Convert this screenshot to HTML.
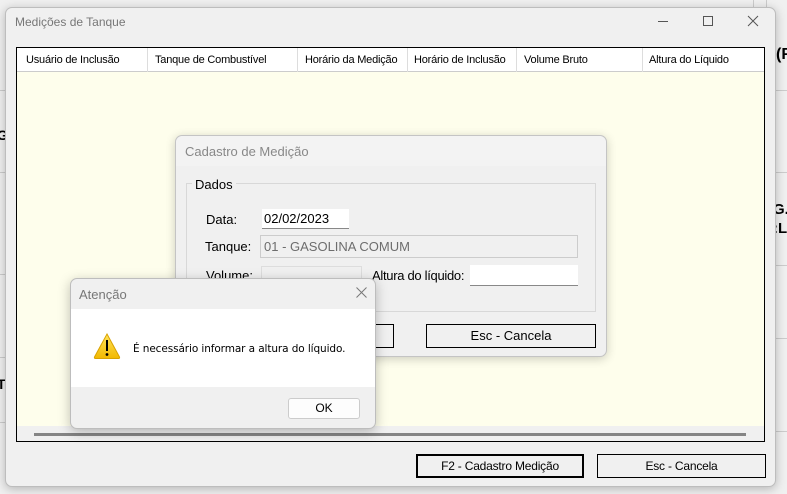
<!DOCTYPE html>
<html><head><meta charset="utf-8"><style>
*{box-sizing:border-box;margin:0;padding:0}
body{width:787px;height:494px;overflow:hidden;background:#f0f0f0;font-family:"Liberation Sans",sans-serif;font-size:12px;color:#000;position:relative}
.a{position:absolute}
.hl{position:absolute;height:1px;background:#d6d6d6}
.win{position:absolute;left:5px;top:7px;width:771px;height:480px;background:#f0f0f0;border:1px solid #bdbdbd;border-radius:7px;box-shadow:0 2px 10px rgba(0,0,0,.25)}
.btn{position:absolute;border:1px solid #000;background:#f0f0f0;text-align:center;font-size:12px}
</style></head><body>
<div class="a" style="left:753px;top:0;width:14px;height:8px;border-left:1px solid #ccc;border-right:1px solid #ccc"></div>
<div class="hl" style="left:0;top:90px;width:20px;background:#ccc"></div>
<div class="hl" style="left:0;top:172px;width:20px;background:#ccc"></div>
<div class="hl" style="left:0;top:274px;width:20px;background:#ccc"></div>
<div class="hl" style="left:0;top:357px;width:20px;background:#ccc"></div>
<div class="hl" style="left:0;top:422px;width:20px;background:#ccc"></div>
<div class="a" style="left:-3px;top:127px;font-weight:bold;font-size:14px">G</div>
<div class="a" style="left:-3px;top:376px;font-weight:bold;font-size:14px">T</div>
<div class="hl" style="left:776px;top:90px;width:11px;background:#ccc"></div>
<div class="hl" style="left:776px;top:172px;width:11px;background:#ccc"></div>
<div class="hl" style="left:776px;top:265px;width:11px;background:#ccc"></div>
<div class="hl" style="left:776px;top:338px;width:11px;background:#ccc"></div>
<div class="hl" style="left:776px;top:431px;width:11px;background:#ccc"></div>
<div class="a" style="left:776px;top:46px;font-weight:bold;font-size:16px">(F</div>
<div class="a" style="left:773px;top:201px;font-weight:bold;font-size:15px">G.</div>
<div class="a" style="left:773px;top:220px;font-weight:bold;font-size:15px">:L</div>

<div class="win">
 <div class="a" style="left:9px;top:7px;color:#777;font-size:12px">Medições de Tanque</div>
 <div class="a" style="left:652px;top:13px;width:10px;height:1px;background:#555"></div>
 <div class="a" style="left:697px;top:8px;width:10px;height:10px;border:1px solid #555"></div>
 <svg class="a" style="left:741px;top:7px" width="12" height="12"><path d="M1 1L11 11M11 1L1 11" stroke="#555" stroke-width="1"/></svg>
 <div class="a" style="left:10px;top:39px;width:749px;height:395px;border:1px solid #000;background:#fefeec">
  <div class="a" style="left:0;top:0;width:747px;height:24px;background:#fff;border-bottom:1px solid #ccc;font-size:11px;letter-spacing:-0.2px">
   <div class="a" style="left:9px;top:6px">Usuário de Inclusão</div>
   <div class="a" style="left:130px;top:0;height:24px;border-left:1px solid #ddd"></div>
   <div class="a" style="left:138px;top:6px">Tanque de Combustível</div>
   <div class="a" style="left:280px;top:0;height:24px;border-left:1px solid #ddd"></div>
   <div class="a" style="left:288px;top:6px">Horário da Medição</div>
   <div class="a" style="left:390px;top:0;height:24px;border-left:1px solid #ddd"></div>
   <div class="a" style="left:397px;top:6px">Horário de Inclusão</div>
   <div class="a" style="left:499px;top:0;height:24px;border-left:1px solid #ddd"></div>
   <div class="a" style="left:507px;top:6px">Volume Bruto</div>
   <div class="a" style="left:625px;top:0;height:24px;border-left:1px solid #ddd"></div>
   <div class="a" style="left:632px;top:6px">Altura do Líquido</div>
  </div>
  <div class="a" style="left:0;top:378px;width:747px;height:15px;background:#f0f0f0"></div>
  <div class="a" style="left:17px;top:385px;width:712px;height:3px;background:#858585"></div>
 </div>
 <div class="btn" style="left:410px;top:446px;width:168px;height:24px;border-width:2px;line-height:20px;letter-spacing:-0.2px">F2 - Cadastro Medição</div>
 <div class="btn" style="left:591px;top:446px;width:169px;height:24px;line-height:22px;letter-spacing:-0.2px">Esc - Cancela</div>
</div>

<div class="a" style="left:175px;top:135px;width:432px;height:222px;background:#f0f0f0;border:1px solid #c4c4c4;border-radius:7px;box-shadow:0 2px 10px rgba(0,0,0,.2)">
 <div class="a" style="left:0;top:0;width:430px;height:30px;background:#f3f3f3;border-radius:7px 7px 0 0"></div>
 <div class="a" style="left:9px;top:8px;color:#888;font-size:13px">Cadastro de Medição</div>
 <div class="a" style="left:10px;top:47px;width:410px;height:129px;border:1px solid #d8d8d8"></div>
 <div class="a" style="left:16px;top:41px;background:#f0f0f0;padding:0 3px;font-size:13px">Dados</div>
 <div class="a" style="left:30px;top:76px;font-size:13px">Data:</div>
 <div class="a" style="left:86px;top:73px;width:87px;height:20px;background:#fff;border-bottom:1px solid #888;padding:2px 2px;font-size:13px">02/02/2023</div>
 <div class="a" style="left:29px;top:103px;font-size:13px">Tanque:</div>
 <div class="a" style="left:84px;top:99px;width:318px;height:23px;background:#f0f0f0;border:1px solid #ccc;padding:3px 3px;font-size:13px;color:#6d6d6d">01 - GASOLINA COMUM</div>
 <div class="a" style="left:30px;top:132px;font-size:13px">Volume:</div>
 <div class="a" style="left:85px;top:130px;width:101px;height:20px;background:#f0f0f0;border:1px solid #ddd"></div>
 <div class="a" style="left:196px;top:132px;font-size:13px;letter-spacing:-0.3px">Altura do líquido:</div>
 <div class="a" style="left:294px;top:129px;width:108px;height:21px;background:#fff;border-bottom:1px solid #888"></div>
 <div class="btn" style="left:110px;top:188px;width:108px;height:24px"></div>
 <div class="btn" style="left:250px;top:188px;width:170px;height:24px;line-height:22px;font-size:13px">Esc - Cancela</div>
</div>

<div class="a" style="left:70px;top:278px;width:306px;height:151px;background:#f0f0f0;border:1px solid #bdbdbd;border-radius:7px;box-shadow:0 3px 12px rgba(0,0,0,.25);overflow:hidden">
 <div class="a" style="left:8px;top:8px;color:#777;font-size:13px">Atenção</div>
 <svg class="a" style="left:285px;top:8px" width="11" height="11"><path d="M0.5 0.5L10.5 10.5M10.5 0.5L0.5 10.5" stroke="#777" stroke-width="1"/></svg>
 <div class="a" style="left:0;top:30px;width:306px;height:78px;background:#fff"></div>
 <svg class="a" style="left:22px;top:53px" width="28" height="28" viewBox="0 0 28 28">
  <defs><linearGradient id="g" x1="0" y1="0" x2="0" y2="1"><stop offset="0" stop-color="#ffe45c"/><stop offset="1" stop-color="#f2b800"/></linearGradient></defs>
  <path d="M14 2 L26.5 25 Q27 26.5 25.5 26.5 L2.5 26.5 Q1 26.5 1.5 25 Z" fill="url(#g)" stroke="#d9a200" stroke-width="1"/>
  <rect x="13" y="8" width="2" height="11" fill="#000"/>
  <circle cx="14" cy="22.5" r="1.4" fill="#000"/>
 </svg>
 <div class="a" style="left:62px;top:64px;font-family:'DejaVu Sans',sans-serif;font-size:10.5px;letter-spacing:-0.1px">É necessário informar a altura do líquido.</div>
 <div class="a" style="left:217px;top:119px;width:72px;height:21px;background:#fdfdfd;border:1px solid #ccc;border-radius:3px;text-align:center;line-height:19px;font-size:12px">OK</div>
</div>
</body></html>
